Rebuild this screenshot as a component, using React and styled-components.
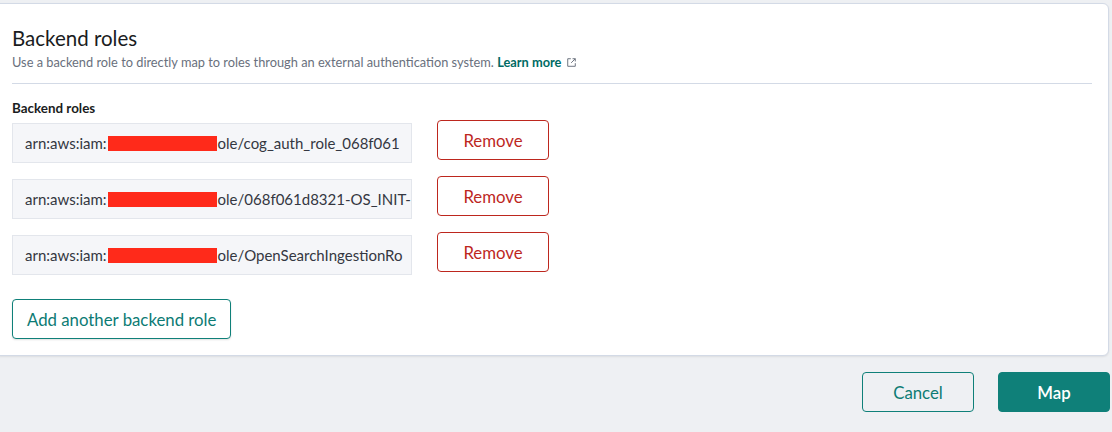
import React from 'react';
import styled, { createGlobalStyle } from 'styled-components';

const GlobalStyle = createGlobalStyle`
  html, body {
    margin: 0;
    padding: 0;
    background: #eef0f3;
    font-family: Lato, "Noto Sans", sans-serif;
    color: #343741;
  }
`;

const Page = styled.div`
  width: 1112px;
  height: 432px;
  overflow: hidden;
  padding-top: 3px;
  box-sizing: border-box;
`;

const Panel = styled.section`
  width: 1110px;
  margin-left: -1px;
  background: #fff;
  border: 1px solid #d3dae6;
  border-radius: 0 6px 6px 0;
  box-shadow: 0 1px 2px rgba(0, 0, 0, 0.08);
  padding: 21px 16px 16px 12px;
  box-sizing: border-box;
`;

const Title = styled.h2`
  margin: 0;
  font-size: 20.5px;
  font-weight: 400;
  line-height: 26px;
  color: #1a1c21;
`;

const Subtitle = styled.p`
  margin: 2px 0 0;
  font-size: 12.8px;
  line-height: 18px;
  color: #69707d;
`;

const LearnMore = styled.a`
  color: #006b64;
  font-weight: 700;
  text-decoration: none;
  display: inline-flex;
  align-items: center;
  gap: 5px;
`;

const Divider = styled.hr`
  border: none;
  border-top: 1px solid #d3dae6;
  margin: 12px 0 16px;
`;

const Label = styled.div`
  font-size: 13.4px;
  font-weight: 700;
  line-height: 16px;
  color: #1a1c21;
  margin-bottom: 4px;
`;

const Rows = styled.div`
  display: flex;
  flex-direction: column;
  gap: 13px;
`;

const Row = styled.div`
  display: flex;
  align-items: flex-start;
  gap: 25px;
`;

const Field = styled.div`
  width: 400px;
  height: 40px;
  margin-top: 3px;
  box-sizing: border-box;
  background: #f5f6f9;
  border: 1px solid #e3e6ec;
  padding: 0 0 0 12px;
  display: flex;
  align-items: center;
  font-size: 15px;
  color: #343741;
  white-space: nowrap;
  overflow: hidden;
`;

const Redacted = styled.span`
  display: inline-block;
  flex-shrink: 0;
  width: 109px;
  height: 15px;
  margin: 0 1px;
  background: #ff2a1a;
`;

const Button = styled.button`
  height: 40px;
  min-width: 112px;
  box-sizing: border-box;
  border-radius: 4px;
  font-family: inherit;
  font-size: 16.8px;
  padding: 0 14px;
  cursor: pointer;
  background: ${({ filled }) => (filled ? '#0f8079' : 'transparent')};
  color: ${({ danger, filled }) => (filled ? '#fff' : danger ? '#bd271e' : '#0c7b74')};
  border: 1px solid ${({ danger, filled }) => (filled ? '#0f8079' : danger ? '#bd271e' : '#0f8079')};
  font-weight: ${({ filled }) => (filled ? 600 : 400)};
`;

const PanelButton = styled(Button)`
  background: #fff;
  box-shadow: 0 1px 2px rgba(0, 0, 0, 0.12);
`;

const AddWrap = styled.div`
  margin-top: 24px;
`;

const Footer = styled.div`
  display: flex;
  justify-content: flex-end;
  gap: 24px;
  padding: 16px 2px 0 0;
`;

const ExternalIcon = () => (
  <svg width="11" height="11" viewBox="0 0 16 16" fill="none" stroke="#69707d" strokeWidth="1.4">
    <path d="M7 2.5H2.5v11h11V9" />
    <path d="M9.5 2.5h4v4M13.5 2.5L7.5 8.5" />
  </svg>
);

const roles = [
  'ole/cog_auth_role_068f061',
  'ole/068f061d8321-OS_INIT-',
  'ole/OpenSearchIngestionRo',
];

const App = () => (
  <>
    <GlobalStyle />
    <Page>
      <Panel>
        <Title>Backend roles</Title>
        <Subtitle>
          Use a backend role to directly map to roles through an external authentication system.{' '}
          <LearnMore href="#">
            Learn more <ExternalIcon />
          </LearnMore>
        </Subtitle>
        <Divider />
        <Label>Backend roles</Label>
        <Rows>
          {roles.map((r) => (
            <Row key={r}>
              <Field>
                arn:aws:iam:<Redacted />
                {r}
              </Field>
              <Button danger>Remove</Button>
            </Row>
          ))}
        </Rows>
        <AddWrap>
          <PanelButton>Add another backend role</PanelButton>
        </AddWrap>
      </Panel>
      <Footer>
        <Button>Cancel</Button>
        <Button filled>Map</Button>
      </Footer>
    </Page>
  </>
);

export default App;
